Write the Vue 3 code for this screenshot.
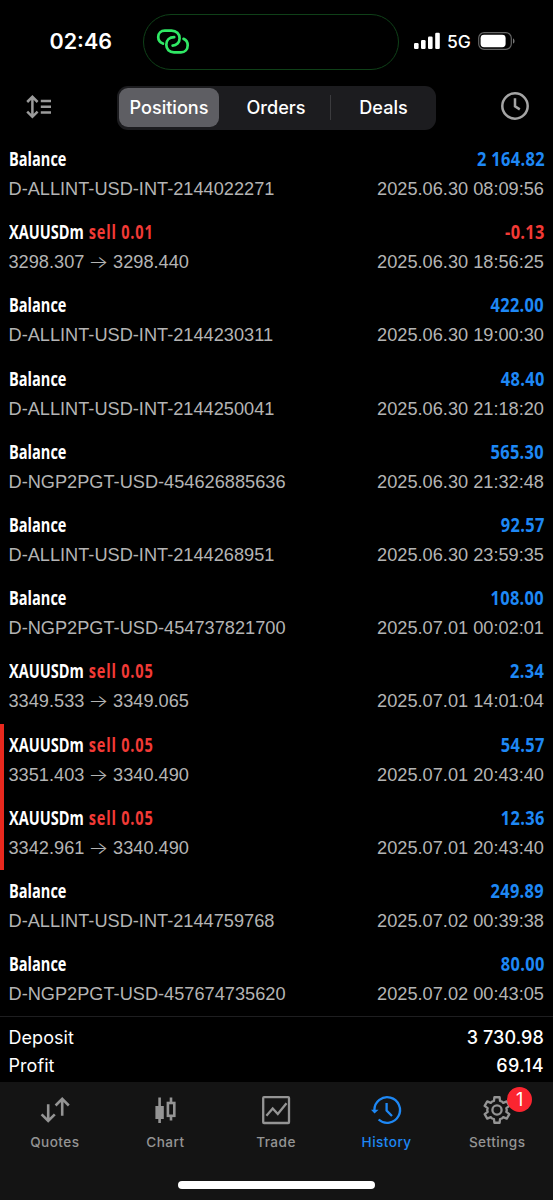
<script setup>
const rows = [
  { title: 'Balance', value: '2 164.82', sub: 'D-ALLINT-USD-INT-2144022271', time: '2025.06.30 08:09:56' },
  { title: 'XAUUSDm', side: 'sell 0.01', value: '-0.13', loss: true, from: '3298.307', to: '3298.440', time: '2025.06.30 18:56:25' },
  { title: 'Balance', value: '422.00', sub: 'D-ALLINT-USD-INT-2144230311', time: '2025.06.30 19:00:30' },
  { title: 'Balance', value: '48.40', sub: 'D-ALLINT-USD-INT-2144250041', time: '2025.06.30 21:18:20' },
  { title: 'Balance', value: '565.30', sub: 'D-NGP2PGT-USD-454626885636', time: '2025.06.30 21:32:48' },
  { title: 'Balance', value: '92.57', sub: 'D-ALLINT-USD-INT-2144268951', time: '2025.06.30 23:59:35' },
  { title: 'Balance', value: '108.00', sub: 'D-NGP2PGT-USD-454737821700', time: '2025.07.01 00:02:01' },
  { title: 'XAUUSDm', side: 'sell 0.05', value: '2.34', from: '3349.533', to: '3349.065', time: '2025.07.01 14:01:04' },
  { title: 'XAUUSDm', side: 'sell 0.05', value: '54.57', mark: true, from: '3351.403', to: '3340.490', time: '2025.07.01 20:43:40' },
  { title: 'XAUUSDm', side: 'sell 0.05', value: '12.36', mark: true, from: '3342.961', to: '3340.490', time: '2025.07.01 20:43:40' },
  { title: 'Balance', value: '249.89', sub: 'D-ALLINT-USD-INT-2144759768', time: '2025.07.02 00:39:38' },
  { title: 'Balance', value: '80.00', sub: 'D-NGP2PGT-USD-457674735620', time: '2025.07.02 00:43:05' },
]
const tabs = ['Quotes', 'Chart', 'Trade', 'History', 'Settings']

// Outline of a six-tooth gear centred on 16,16.
const gear = (() => {
  const pts = []
  for (let i = 0; i < 6; i++) {
    const a = (i * Math.PI) / 3 - Math.PI / 2
    for (const [r, d] of [[9.5, -0.33], [13, -0.2], [13, 0.2], [9.5, 0.33], [9.8, Math.PI / 6]]) {
      pts.push(`${(16 + r * Math.cos(a + d)).toFixed(2)} ${(16 + r * Math.sin(a + d)).toFixed(2)}`)
    }
  }
  return `M${pts.join('L')}Z`
})()
</script>

<template>
  <div class="phone">
    <header class="status">
      <div class="clock">02:46</div>
      <div class="island">
        <svg width="34" height="28" viewBox="0 0 34 28" fill="none" stroke="#30e865" stroke-width="2.7" stroke-linecap="round">
          <path d="M7 15.6C3.9 14.2 2.2 11.8 2.2 8.9C2.2 5.2 5 2.6 8.7 2.6H15.5C20.3 2.6 23.6 5.8 23.6 10.2C23.6 14.6 20.5 17.6 16.6 17.6" />
          <path d="M27.5 10.8C30.2 12.1 31.7 14.3 31.7 17.2C31.7 21.3 28.9 24.3 25 24.3H18C13.3 24.3 10.3 21.2 10.3 16.8C10.3 12.3 13.4 9.2 18.2 9.2" />
        </svg>
      </div>
      <div class="radio">
        <svg width="26" height="18" viewBox="0 0 26 18" fill="#fff">
          <rect x="0" y="11" width="4.6" height="6" rx="1.2" />
          <rect x="7" y="8" width="4.6" height="9" rx="1.2" />
          <rect x="14" y="4.6" width="4.6" height="12.4" rx="1.2" />
          <rect x="21.2" y="0.8" width="4.6" height="16.2" rx="1.2" />
        </svg>
        <span class="net">5G</span>
        <svg width="38" height="18" viewBox="0 0 38 18">
          <rect x="0.7" y="0.7" width="32.6" height="16.6" rx="5.4" fill="none" stroke="#656565" stroke-width="1.2" />
          <rect x="2.6" y="2.8" width="25" height="12.4" rx="3.4" fill="#fff" />
          <path d="M35 6.4C37 7 37 11 35 11.6Z" fill="#777" />
        </svg>
      </div>
    </header>

    <nav class="toolbar">
      <svg class="sort" width="26" height="24" viewBox="0 0 26 24" fill="none" stroke="#9b9b9b" stroke-width="2.5">
        <path d="M6.4 3V20.6M1.2 7L6.4 1.8L11.6 7M1.2 16.6L6.4 21.8L11.6 16.6" />
        <path d="M14.8 6.1H25M14.8 11.8H25M14.8 17.5H25" />
      </svg>
      <div class="segments">
        <span class="segment active">Positions</span>
        <span class="segment">Orders</span>
        <i class="divider"></i>
        <span class="segment">Deals</span>
      </div>
      <svg class="range" width="30" height="30" viewBox="0 0 30 30" fill="none" stroke="#a4a4a4" stroke-width="2.5">
        <circle cx="15" cy="15" r="12.7" />
        <path d="M15 7.2V15.4L19.8 18.4" />
      </svg>
    </nav>

    <main class="list">
      <section v-for="(r, i) in rows" :key="i" class="row" :class="{ mark: r.mark }">
        <div class="line">
          <div class="title"><span>{{ r.title }}</span><span v-if="r.side" class="side">{{ r.side }}</span></div>
          <div class="value" :class="{ loss: r.loss }">{{ r.value }}</div>
        </div>
        <div class="line sub">
          <span v-if="r.sub">{{ r.sub }}</span>
          <span v-else>{{ r.from }} <span class="arrow">→</span> {{ r.to }}</span>
          <span>{{ r.time }}</span>
        </div>
      </section>
    </main>

    <section class="totals">
      <div class="total"><span>Deposit</span><span class="sum">3 730.98</span></div>
      <div class="total"><span>Profit</span><span class="sum wide">69.14</span></div>
    </section>

    <footer class="tabbar">
      <div class="tabs">
        <div v-for="t in tabs" :key="t" class="tab" :class="{ on: t === 'History' }">
          <div class="icon">
            <svg width="32" height="32" viewBox="0 0 32 32" fill="none" stroke="currentColor" stroke-width="2.3">
              <path v-if="t === 'Quotes'" stroke-width="2.6" d="M9.2 10.2V26M2.6 20.3L9.2 26.9L15.8 20.3M23.2 21.8V5M16.6 11.5L23.2 4.9L29.8 11.5" />
              <template v-else-if="t === 'Chart'">
                <path d="M10.6 3.5V29M22 3.5V9M22 22V26.5" stroke-width="2.6" />
                <rect x="6.4" y="12" width="8.4" height="13" fill="currentColor" stroke="none" />
                <rect x="18.9" y="9" width="6.4" height="12.8" stroke-width="2.6" />
              </template>
              <template v-else-if="t === 'Trade'">
                <rect x="3.2" y="3.2" width="25.8" height="25.8" rx="0.8" />
                <path d="M6.4 21.7L12.7 14.5L17.8 20L26.5 9.2" />
              </template>
              <template v-else-if="t === 'History'">
                <path d="M3.4 16A12.8 12.8 0 1 1 7.6 25.5" />
                <path d="M0 15.7H7.6L3.6 19.6Z" fill="currentColor" stroke="none" />
                <path d="M15.6 9V16.6L21 22" />
              </template>
              <template v-else>
                <path :d="gear" stroke-linejoin="round" stroke-width="2.3" />
                <circle cx="16" cy="16" r="4.6" />
              </template>
            </svg>
            <b v-if="t === 'Settings'" class="badge">1</b>
          </div>
          <span class="label">{{ t }}</span>
        </div>
      </div>
      <div class="home"></div>
    </footer>
  </div>
</template>

<style>
body {
  margin: 0;
  background: #000;
}
</style>

<style scoped>
.phone {
  width: 553px;
  height: 1200px;
  background: #000;
  color: #fff;
  overflow: hidden;
  display: flex;
  flex-direction: column;
  font-family: Inter, "Liberation Sans", sans-serif;
}
.status {
  height: 82px;
  display: flex;
  flex: none;
}
.clock {
  padding-left: 49.5px;
  box-sizing: border-box;
  flex: 0 0 143px;
  line-height: 82px;
  font-size: 21.5px;
  font-weight: 600;
}
.island {
  box-sizing: border-box;
  width: 256px;
  height: 56px;
  margin-top: 14px;
  border: 1.5px solid #0f4018;
  border-radius: 28px;
  padding: 13px 0 0 12px;
}
.island svg {
  display: block;
}
.radio {
  display: flex;
  height: 18px;
  margin: 32px 0 0 15px;
  align-items: center;
}
.net {
  width: 24px;
  margin: 1px 7px 0 7px;
  font-size: 17.5px;
  font-weight: 500;
  line-height: 18px;
}
.toolbar {
  height: 56px;
  display: flex;
  flex: none;
}
.sort {
  margin: 12.5px 65px 0 26px;
}
.segments {
  box-sizing: border-box;
  width: 318.5px;
  height: 44px;
  margin-top: 3.5px;
  padding: 2px;
  border-radius: 11px;
  background: #1c1c1f;
  display: flex;
  align-items: center;
}
.segment {
  flex: 0 0 100px;
  height: 39.5px;
  line-height: 39px;
  border-radius: 9px;
  text-align: center;
  font-size: 18.1px;
  font-weight: 500;
}
.segment:nth-child(2) {
  margin: 0 3.5px 0 7px;
}
.divider {
  width: 1px;
  height: 25px;
  background: #3b3b3e;
}
.divider + .segment {
  margin-left: 3px;
}
.active {
  background: #5e5e63;
}
.range {
  margin: 9px 0 0 64.5px;
}
.list {
  height: 878px;
  flex: none;
  display: grid;
  grid-template-rows: repeat(12, 73.2px);
}
.row {
  box-sizing: border-box;
  padding: 8px 9px 0 8.5px;
}
.mark {
  border-left: 4px solid #e8281e;
  padding-left: 4.5px;
}
.line {
  display: flex;
  justify-content: space-between;
  white-space: pre;
  height: 29px;
  line-height: 28px;
}
.title,
.value {
  font-family: "Open Sans", "Noto Sans", sans-serif;
  font-size: 19.3px;
  font-weight: 700;
  transform: scaleX(0.755);
  transform-origin: left;
  line-height: 26.6px;
}
.value {
  color: #1e88f5;
  letter-spacing: 0.4px;
  margin-right: -0.5px;
  transform: scaleX(0.85);
  transform-origin: right;
}
.side,
.value.loss {
  color: #f23a36;
}
.side {
  letter-spacing: 1.05px;
  margin-left: 6.5px;
}
.sub {
  font-family: "Liberation Sans", Arial, sans-serif;
  font-size: 18.2px;
  color: #b4b4b4;
}
.arrow {
  display: inline-block;
  width: 18.6px;
  height: 20px;
  font-family: Inter, sans-serif;
  font-weight: 300;
  font-size: 17px;
  line-height: 20px;
  text-align: center;
  transform: scaleX(1.25);
}
.totals {
  box-sizing: border-box;
  height: 66px;
  flex: none;
  border-top: 1px solid #1e1e20;
  padding: 7px 9px 0 8.5px;
}
.total {
  display: flex;
  justify-content: space-between;
  height: 28px;
  line-height: 27px;
  font-size: 18px;
  letter-spacing: 0.05px;
}
.sum {
  font-weight: 500;
  letter-spacing: 0.1px;
}
.sum.wide {
  letter-spacing: 0.5px;
}
.tabbar {
  flex: 1;
  background: #141414;
}
.tabs {
  height: 99px;
  display: grid;
  grid-template-columns: repeat(5, 1fr);
}
.tab {
  display: flex;
  flex-direction: column;
  align-items: center;
  color: #949494;
  padding: 12px 1px 0 0;
}
.on {
  color: #1e88f5;
}
.icon {
  position: relative;
  width: 32px;
  height: 32px;
}
.icon svg {
  display: block;
}
.badge {
  position: absolute;
  left: 26px;
  top: -7px;
  width: 25px;
  height: 25px;
  border-radius: 50%;
  background: #fb2530;
  color: #fff;
  font-size: 18px;
  font-weight: 400;
  line-height: 25px;
  text-align: center;
}
.label {
  margin-top: 6px;
  line-height: 20px;
  font-size: 13.6px;
  font-weight: 500;
  letter-spacing: 0.45px;
}
.home {
  width: 197px;
  height: 7.5px;
  margin: 0 auto;
  border-radius: 4px;
  background: #fff;
}
</style>
